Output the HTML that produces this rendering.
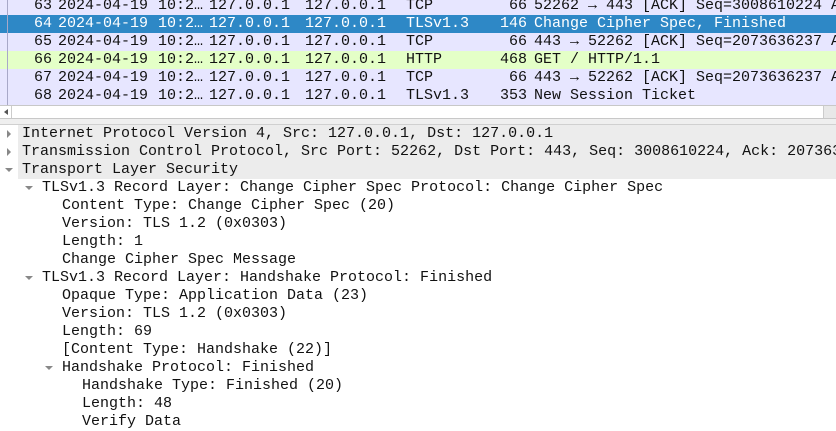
<!DOCTYPE html>
<html><head><meta charset="utf-8"><style>
*{margin:0;padding:0;box-sizing:border-box}
body{width:836px;height:430px;overflow:hidden;background:#fff;font-family:"Liberation Mono","DejaVu Sans Mono",monospace;font-size:15px;color:#111;position:relative}
.top{position:absolute;left:0;top:0;width:836px;height:105px;overflow:hidden}
.r{position:absolute;left:0;width:836px;height:18px;background:#e7e6ff;white-space:pre;line-height:18px}
.r span{position:absolute;top:0}
.sel{background:#2e88c6;color:#fff}
.http{background:#e4ffc7}
.vl{position:absolute;left:7px;top:0;width:1px;height:105px;background:#a8a8c8}
.sb{position:absolute;left:0;top:105px;width:836px;height:14px;background:#fff;border-top:1px solid #c8c8c8;border-bottom:1px solid #c8c8c8}
.split{position:absolute;left:0;top:119px;width:836px;height:6px;background:#efefef;border-bottom:1px solid #d0d0d0}
.det{position:absolute;left:0;top:125px;width:836px;height:305px;background:#fff}
.d{position:absolute;left:0;width:836px;height:18px;line-height:18px;white-space:pre}
.d.g{background:#ececec;left:18px}
.ar{position:absolute;width:0;height:0}
.right{border-top:4px solid transparent;border-bottom:4px solid transparent;border-left:4px solid #888}
.down{border-left:4px solid transparent;border-right:4px solid transparent;border-top:4px solid #888}
</style></head><body>
<div class="top">
<div class="r" style="top:-3px"><span style="left:34px">63</span><span style="left:58px">2024-04-19</span><span style="left:158px">10:2…</span><span style="left:209px">127.0.0.1</span><span style="left:305px">127.0.0.1</span><span style="left:406px">TCP</span><span style="left:509px">66</span><span style="left:534px">52262 → 443 [ACK] Seq=3008610224 A</span></div>
<div class="r sel" style="top:15px"><span style="left:34px">64</span><span style="left:58px">2024-04-19</span><span style="left:158px">10:2…</span><span style="left:209px">127.0.0.1</span><span style="left:305px">127.0.0.1</span><span style="left:406px">TLSv1.3</span><span style="left:500px">146</span><span style="left:534px">Change Cipher Spec, Finished</span></div>
<div class="r" style="top:33px"><span style="left:34px">65</span><span style="left:58px">2024-04-19</span><span style="left:158px">10:2…</span><span style="left:209px">127.0.0.1</span><span style="left:305px">127.0.0.1</span><span style="left:406px">TCP</span><span style="left:509px">66</span><span style="left:534px">443 → 52262 [ACK] Seq=2073636237 A</span></div>
<div class="r http" style="top:51px"><span style="left:34px">66</span><span style="left:58px">2024-04-19</span><span style="left:158px">10:2…</span><span style="left:209px">127.0.0.1</span><span style="left:305px">127.0.0.1</span><span style="left:406px">HTTP</span><span style="left:500px">468</span><span style="left:534px">GET / HTTP/1.1</span></div>
<div class="r" style="top:69px"><span style="left:34px">67</span><span style="left:58px">2024-04-19</span><span style="left:158px">10:2…</span><span style="left:209px">127.0.0.1</span><span style="left:305px">127.0.0.1</span><span style="left:406px">TCP</span><span style="left:509px">66</span><span style="left:534px">443 → 52262 [ACK] Seq=2073636237 A</span></div>
<div class="r" style="top:87px"><span style="left:34px">68</span><span style="left:58px">2024-04-19</span><span style="left:158px">10:2…</span><span style="left:209px">127.0.0.1</span><span style="left:305px">127.0.0.1</span><span style="left:406px">TLSv1.3</span><span style="left:500px">353</span><span style="left:534px">New Session Ticket</span></div>
<div class="vl"></div>
</div>
<div class="sb"><div class="ar" style="left:4px;top:3px;border-top:3px solid transparent;border-bottom:3px solid transparent;border-right:4px solid #555"></div><div style="position:absolute;left:11px;top:0;width:1px;height:12px;background:#ccc"></div><div style="position:absolute;left:823px;top:0;width:13px;height:12px;background:#e8e8e8;border-left:1px solid #ccc"></div></div>
<div class="split"></div>
<div class="det">
<div class="d g" style="top:0"><span style="position:absolute;left:4px">Internet Protocol Version 4, Src: 127.0.0.1, Dst: 127.0.0.1</span></div>
<div class="ar right" style="left:7px;top:5px"></div>
<div class="d g" style="top:18px"><span style="position:absolute;left:4px">Transmission Control Protocol, Src Port: 52262, Dst Port: 443, Seq: 3008610224, Ack: 2073636237</span></div>
<div class="ar right" style="left:7px;top:23px"></div>
<div class="d g" style="top:36px"><span style="position:absolute;left:4px">Transport Layer Security</span></div>
<div class="ar down" style="left:5px;top:43px"></div>
<div class="d" style="top:54px;left:42px">TLSv1.3 Record Layer: Change Cipher Spec Protocol: Change Cipher Spec</div>
<div class="ar down" style="left:25px;top:61px"></div>
<div class="d" style="top:72px;left:62px">Content Type: Change Cipher Spec (20)</div>
<div class="d" style="top:90px;left:62px">Version: TLS 1.2 (0x0303)</div>
<div class="d" style="top:108px;left:62px">Length: 1</div>
<div class="d" style="top:126px;left:62px">Change Cipher Spec Message</div>
<div class="d" style="top:144px;left:42px">TLSv1.3 Record Layer: Handshake Protocol: Finished</div>
<div class="ar down" style="left:25px;top:151px"></div>
<div class="d" style="top:162px;left:62px">Opaque Type: Application Data (23)</div>
<div class="d" style="top:180px;left:62px">Version: TLS 1.2 (0x0303)</div>
<div class="d" style="top:198px;left:62px">Length: 69</div>
<div class="d" style="top:216px;left:62px">[Content Type: Handshake (22)]</div>
<div class="d" style="top:234px;left:62px">Handshake Protocol: Finished</div>
<div class="ar down" style="left:45px;top:241px"></div>
<div class="d" style="top:252px;left:82px">Handshake Type: Finished (20)</div>
<div class="d" style="top:270px;left:82px">Length: 48</div>
<div class="d" style="top:288px;left:82px">Verify Data</div>
</div>
</body></html>
